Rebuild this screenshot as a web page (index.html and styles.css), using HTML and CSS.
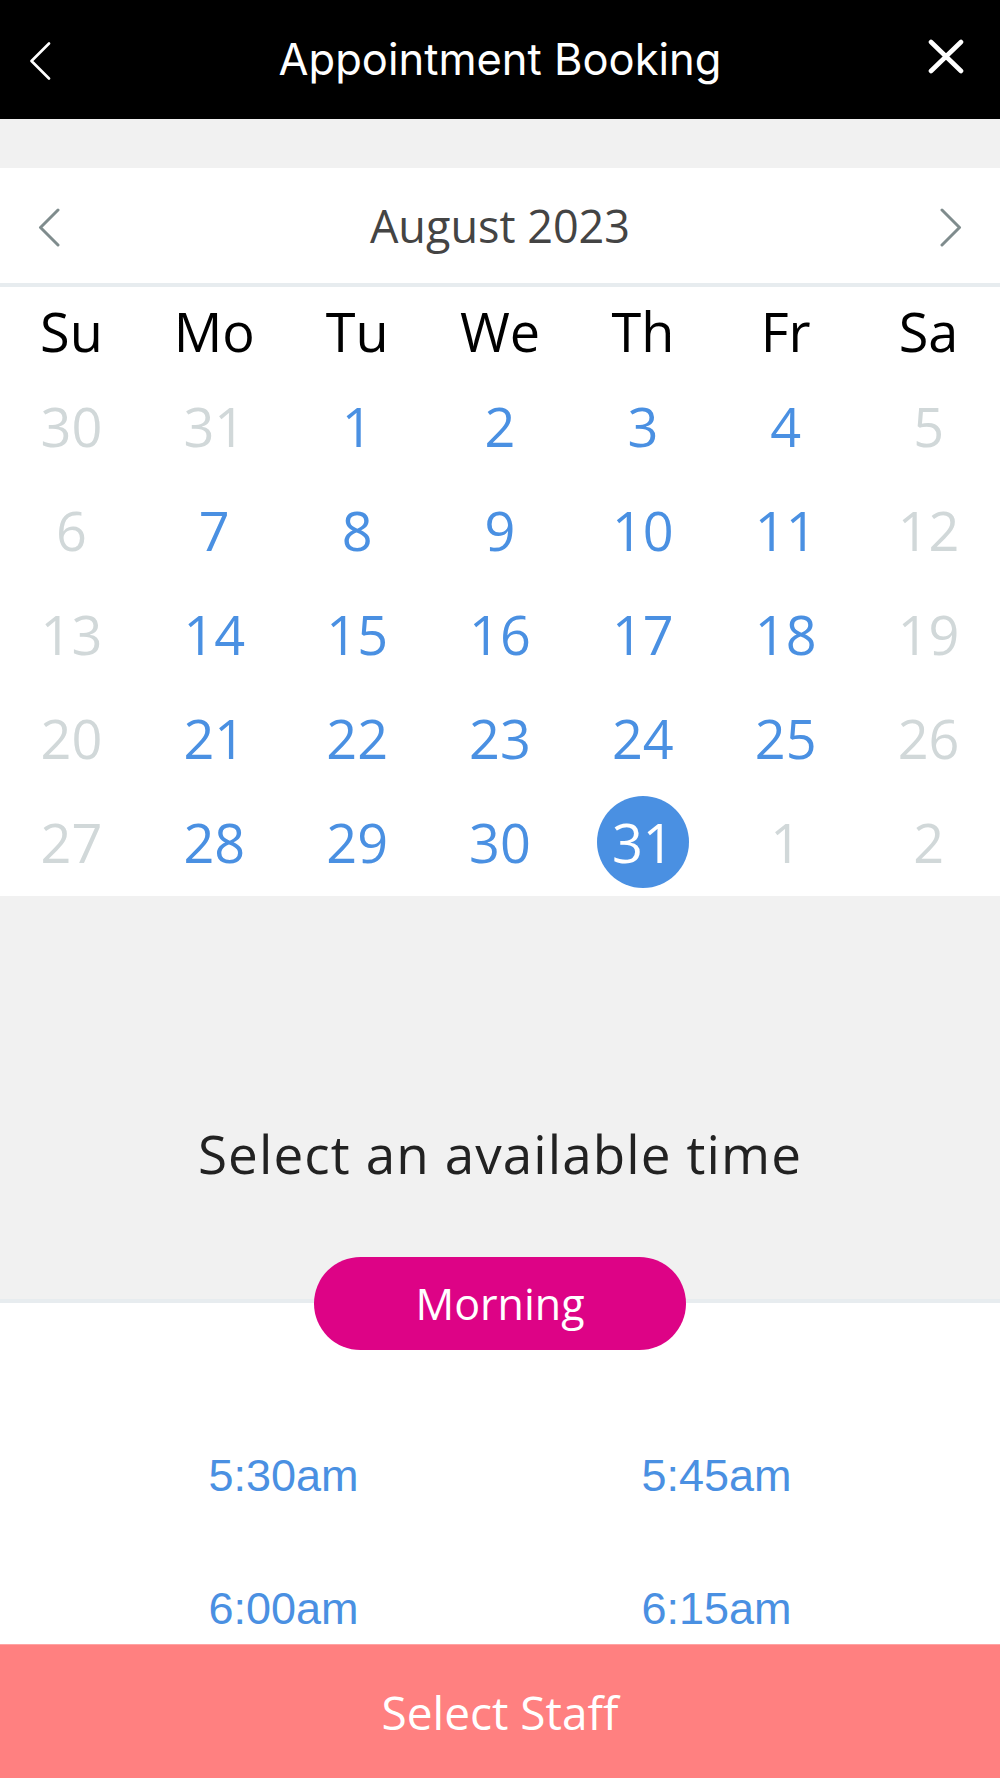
FILE: index.html
```html
<!DOCTYPE html>
<html lang="en">

<head>
    <title>Appointment Booking</title>
    <meta charset="UTF-8" />
    <meta name="viewport" content="width=device-width,initial-scale=1" />
    <link rel="stylesheet" href="styles.css">
</head>

<body>
    <header class="topbar">
        <button class="topbar-back" aria-label="Back">
            <svg width="22" height="38" viewBox="0 0 22 38"><polyline points="20,1.5 2.5,19 20,36.5" fill="none" stroke="#fff" stroke-width="2.6" stroke-linecap="round" stroke-linejoin="round" /></svg>
        </button>
        <h1 class="topbar-title">Appointment Booking</h1>
        <button class="topbar-close" aria-label="Close">
            <svg width="36" height="35" viewBox="0 0 36 35"><path d="M3 3 L33 32 M33 3 L3 32" fill="none" stroke="#fff" stroke-width="4.6" stroke-linecap="round" /></svg>
        </button>
    </header>

    <main>
        <section class="calendar">
            <div class="month-bar">
                <button class="month-nav" aria-label="Previous month">
                    <svg width="22" height="39" viewBox="0 0 22 39"><polyline points="20,2 2.5,19.5 20,37" fill="none" stroke="#7f8c8d" stroke-width="3" stroke-linecap="round" stroke-linejoin="round" /></svg>
                </button>
                <span class="month-name">August 2023</span>
                <button class="month-nav" aria-label="Next month">
                    <svg width="22" height="39" viewBox="0 0 22 39"><polyline points="2,2 19.5,19.5 2,37" fill="none" stroke="#7f8c8d" stroke-width="3" stroke-linecap="round" stroke-linejoin="round" /></svg>
                </button>
            </div>

            <div class="weekdays">
                <span>Su</span><span>Mo</span><span>Tu</span><span>We</span><span>Th</span><span>Fr</span><span>Sa</span>
            </div>

            <div class="days">
                <span class="day muted">30</span><span class="day muted">31</span><span class="day">1</span><span class="day">2</span><span class="day">3</span><span class="day">4</span><span class="day muted">5</span>
                <span class="day muted">6</span><span class="day">7</span><span class="day">8</span><span class="day">9</span><span class="day">10</span><span class="day">11</span><span class="day muted">12</span>
                <span class="day muted">13</span><span class="day">14</span><span class="day">15</span><span class="day">16</span><span class="day">17</span><span class="day">18</span><span class="day muted">19</span>
                <span class="day muted">20</span><span class="day">21</span><span class="day">22</span><span class="day">23</span><span class="day">24</span><span class="day">25</span><span class="day muted">26</span>
                <span class="day muted">27</span><span class="day">28</span><span class="day">29</span><span class="day">30</span><span class="day selected"><b>31</b></span><span class="day muted">1</span><span class="day muted">2</span>
            </div>
        </section>

        <section class="time-intro">
            <p class="time-heading">Select an available time</p>
            <button class="period-pill">Morning</button>
        </section>

        <section class="slots">
            <button class="slot">5:30am</button>
            <button class="slot">5:45am</button>
            <button class="slot">6:00am</button>
            <button class="slot">6:15am</button>
        </section>
    </main>

    <button class="staff-button">Select Staff</button>
</body>

</html>
```

FILE: styles.css
```css
/* Reset */
* {
    box-sizing: border-box;
}

html,
body,
h1,
p,
button {
    margin: 0;
    padding: 0;
}

button {
    background: none;
    border: 0;
    font: inherit;
    color: inherit;
    cursor: pointer;
}

/* Variables */
:root {
    --blue: #4a90e2;
    --muted: #d1d8d9;
    --grey-bg: #f1f1f1;
    --line: #e7ecef;
    --magenta: #dd0386;
    --salmon: #ff8080;
}

body {
    background: #fff;
    color: #222;
    font-family: "Open Sans", "Liberation Sans", sans-serif;
}

/* Top bar */
.topbar {
    background: #000;
    height: 119px;
    display: grid;
    grid-template-columns: 1fr auto 1fr;
    align-items: center;
    padding: 0 36px;
}

.topbar-back {
    justify-self: start;
    display: flex;
    margin: 2px 0 0 -7px;
}

.topbar-title {
    color: #fff;
    font-family: Inter, "Open Sans", sans-serif;
    font-weight: 400;
    font-size: 43.5px;
    line-height: 1;
}

.topbar-close {
    justify-self: end;
    display: flex;
    margin-bottom: 7px;
}

/* Calendar */
main {
    background: var(--grey-bg);
    padding-top: 49px;
}

.calendar {
    background: #fff;
    padding-bottom: 2px;
}

.month-bar {
    height: 119px;
    border-bottom: 4px solid var(--line);
    display: flex;
    align-items: center;
    justify-content: space-between;
    padding: 0 38px;
}

.month-nav {
    display: flex;
    margin-top: 4px;
}

.month-name {
    color: #444;
    font-size: 45px;
    line-height: 1;
}

.weekdays,
.days {
    display: grid;
    grid-template-columns: repeat(7, 1fr);
    text-align: center;
}

.weekdays span {
    height: 87px;
    display: flex;
    align-items: center;
    justify-content: center;
    color: #000;
    font-size: 54px;
    line-height: 1;
}

.day {
    height: 104px;
    display: flex;
    align-items: center;
    justify-content: center;
    color: var(--blue);
    font-size: 54px;
    line-height: 1;
}

.day.muted {
    color: var(--muted);
}

.day.selected b {
    width: 92px;
    height: 92px;
    border-radius: 50%;
    background: var(--blue);
    color: #fff;
    font-weight: 400;
    display: flex;
    align-items: center;
    justify-content: center;
}

/* Time selection */
.time-intro {
    padding-top: 226px;
    border-bottom: 4px solid var(--line);
    text-align: center;
}

.time-heading {
    color: #222;
    font-size: 53px;
    line-height: 1.2;
    letter-spacing: 1.1px;
}

.period-pill {
    position: relative;
    display: block;
    width: 372px;
    height: 93px;
    margin: 71px auto -51px;
    border-radius: 47px;
    background: var(--magenta);
    color: #fff;
    font-size: 43px;
    line-height: 93px;
}

.slots {
    background: #fff;
    display: grid;
    grid-template-columns: 1fr 1fr;
    grid-auto-rows: 133px;
    padding: 107px 67px 0;
}

.slot {
    color: var(--blue);
    font-family: "Liberation Sans", Arial, sans-serif;
    font-size: 45px;
}

/* Bottom action */
.staff-button {
    position: fixed;
    left: 0;
    right: 0;
    bottom: 0;
    height: 134px;
    background: var(--salmon);
    border-top: 1px solid #ffa3a3;
    color: #fff;
    font-size: 46px;
}
```
